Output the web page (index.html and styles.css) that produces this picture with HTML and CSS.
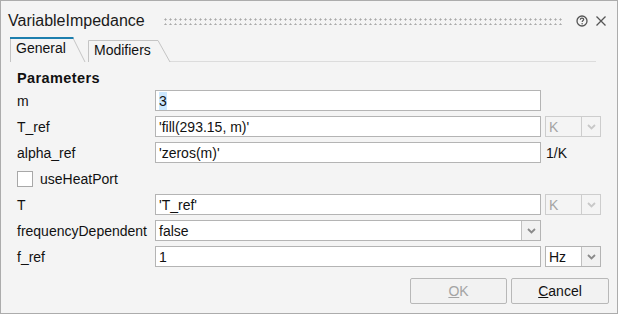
FILE: index.html
```html
<!DOCTYPE html>
<html>
<head>
<meta charset="utf-8">
<link rel="stylesheet" href="styles.css">
</head>
<body>
<div class="dialog">
  <div class="titlebar">
    <span class="title">VariableImpedance</span>
    <span class="grip"></span>
    <svg class="icon" width="12" height="12" viewBox="0 0 12 12"><circle cx="6" cy="6" r="5" fill="none" stroke="#555" stroke-width="1.3"/><path d="M4.3 4.7 C4.3 3.6 5 3.1 6 3.1 C7 3.1 7.7 3.7 7.7 4.5 C7.7 5.5 6.2 5.6 6.2 6.9" fill="none" stroke="#555" stroke-width="1.2"/><circle cx="6.1" cy="8.7" r="0.75" fill="#555"/></svg>
    <svg class="icon close" width="12" height="12" viewBox="0 0 12 12"><path d="M1.5 1.5 L10.5 10.5 M10.5 1.5 L1.5 10.5" stroke="#555" stroke-width="1.3"/></svg>
  </div>
  <div class="tabbar">
    <div class="tab active">
      <svg class="tabshape" width="76" height="25" viewBox="0 0 76 25"><path d="M0.5 25 V1 H63 L75 25" fill="#f4f4f4" stroke="#c4c4c4"/><path d="M0 1 H63.5" stroke="#1d7fae" stroke-width="2"/></svg>
      <span class="tablabel">General</span>
    </div>
    <div class="tab">
      <svg class="tabshape" width="83" height="22" viewBox="0 0 83 22"><path d="M0.5 22 V0.5 H70 L82 22" fill="#f4f4f4" stroke="#c4c4c4"/></svg>
      <span class="tablabel">Modifiers</span>
    </div>
    <div class="tabline"></div>
  </div>
  <div class="content">
    <div class="heading">Parameters</div>
    <div class="grid">
      <div class="label">m</div>
      <div class="field"><span class="sel">3</span></div>
      <div></div>

      <div class="label">T_ref</div>
      <div class="field">'fill(293.15, m)'</div>
      <div class="unit disabled"><span class="utext">K</span><span class="ubtn"><svg width="9" height="6" viewBox="0 0 9 6"><path d="M1 1 L4.5 4.5 L8 1" fill="none" stroke="#c8c8c8" stroke-width="1.8"/></svg></span></div>

      <div class="label">alpha_ref</div>
      <div class="field">'zeros(m)'</div>
      <div class="unitlabel">1/K</div>

      <div class="check"><span class="box"></span><span>useHeatPort</span></div>

      <div class="label">T</div>
      <div class="field">'T_ref'</div>
      <div class="unit disabled"><span class="utext">K</span><span class="ubtn"><svg width="9" height="6" viewBox="0 0 9 6"><path d="M1 1 L4.5 4.5 L8 1" fill="none" stroke="#c8c8c8" stroke-width="1.8"/></svg></span></div>

      <div class="label">frequencyDependent</div>
      <div class="field combo"><span class="ctext">false</span><span class="ubtn"><svg width="9" height="6" viewBox="0 0 9 6"><path d="M1 1 L4.5 4.5 L8 1" fill="none" stroke="#8a8a8a" stroke-width="1.8"/></svg></span></div>
      <div></div>

      <div class="label">f_ref</div>
      <div class="field">1</div>
      <div class="unit"><span class="utext">Hz</span><span class="ubtn"><svg width="9" height="6" viewBox="0 0 9 6"><path d="M1 1 L4.5 4.5 L8 1" fill="none" stroke="#8a8a8a" stroke-width="1.8"/></svg></span></div>
    </div>
  </div>
  <div class="buttons">
    <div class="btn disabled"><u>O</u>K</div>
    <div class="btn"><u>C</u>ancel</div>
  </div>
</div>
</body>
</html>
```
FILE: styles.css
```css
html, body {
  margin: 0;
  padding: 0;
  background: #f4f4f4;
}
body {
  font-family: "Liberation Sans", Arial, sans-serif;
  font-size: 14px;
  color: #111;
}
.dialog {
  width: 618px;
  height: 314px;
  box-sizing: border-box;
  border: 1px solid #acacac;
  background: #f4f4f4;
  display: flex;
  flex-direction: column;
}
.titlebar {
  height: 32px;
  padding: 4px 10px 0 7px;
  display: flex;
  align-items: center;
}
.title {
  font-size: 16px;
  color: #1a1a1a;
  margin-right: 18px;
}
.grip {
  flex: 1;
  height: 8px;
  margin-right: 12px;
  background-image: radial-gradient(circle, #a9a9a9 0.9px, transparent 1.2px);
  background-size: 5px 5px;
  background-position: 0 0;
}
.icon {
  display: block;
}
.close {
  margin-left: 7px;
}
.tabbar {
  height: 25px;
  display: flex;
  align-items: flex-end;
  padding-left: 9px;
}
.tab {
  position: relative;
  height: 25px;
  width: 76px;
  box-sizing: border-box;
}
.tab + .tab {
  width: 83px;
  height: 22px;
  margin-left: 2px;
  border-bottom: 1px solid #dcdcdc;
}
.tab.active {
  border-bottom: none;
}
.tabshape {
  position: absolute;
  left: 0;
  top: 0;
}
.tablabel {
  position: relative;
  display: block;
  padding-left: 6px;
  line-height: 23px;
}
.tab + .tab .tablabel {
  line-height: 20px;
}
.tabline {
  flex: 1;
  height: 0;
  border-bottom: 1px solid #dcdcdc;
  margin-right: 21px;
}
.content {
  flex: 1;
  padding: 8px 0 0 16px;
}
.heading {
  font-weight: bold;
  font-size: 14.5px;
  letter-spacing: 0.4px;
  height: 16px;
  line-height: 16px;
  margin-bottom: 4px;
}
.grid {
  display: grid;
  grid-template-columns: 134px 386px 56px;
  grid-auto-rows: 21px;
  column-gap: 4px;
  row-gap: 5px;
}
.label {
  display: flex;
  align-items: center;
  color: #111;
  white-space: nowrap;
}
.field {
  box-sizing: border-box;
  border: 1px solid #b4b4b4;
  background: #fff;
  padding-left: 3px;
  display: flex;
  align-items: center;
  white-space: nowrap;
}
.sel {
  background: #cce8ff;
  padding: 1px 0;
}
.combo {
  padding-right: 0;
}
.ctext {
  flex: 1;
}
.ubtn {
  width: 19px;
  height: 100%;
  box-sizing: border-box;
  border-left: 1px solid #c0c0c0;
  background: #f1f1f1;
  display: flex;
  align-items: center;
  justify-content: center;
}
.unit {
  box-sizing: border-box;
  border: 1px solid #b4b4b4;
  background: #fff;
  display: flex;
  align-items: center;
}
.utext {
  flex: 1;
  padding-left: 3px;
}
.unit.disabled {
  background: #f4f4f4;
  border-color: #cdcdcd;
  color: #a4a4a4;
}
.unit.disabled .ubtn {
  border-left-color: #cdcdcd;
  background: #f4f4f4;
}
.unitlabel {
  display: flex;
  align-items: center;
  padding-left: 1px;
}
.check {
  grid-column: 1 / 4;
  display: flex;
  align-items: center;
  gap: 7px;
}
.box {
  width: 16px;
  height: 16px;
  box-sizing: border-box;
  border: 1px solid #a8a8a8;
  background: #fff;
}
.buttons {
  display: flex;
  justify-content: flex-end;
  gap: 4px;
  padding: 0 8px 9px 0;
}
.btn {
  width: 98px;
  height: 26px;
  box-sizing: border-box;
  border: 1px solid #b8b8b8;
  border-radius: 2px;
  background: #f2f2f2;
  display: flex;
  align-items: center;
  justify-content: center;
  color: #111;
  font-size: 14px;
}
.btn.disabled {
  width: 97px;
  color: #a4a4a4;
}
```
